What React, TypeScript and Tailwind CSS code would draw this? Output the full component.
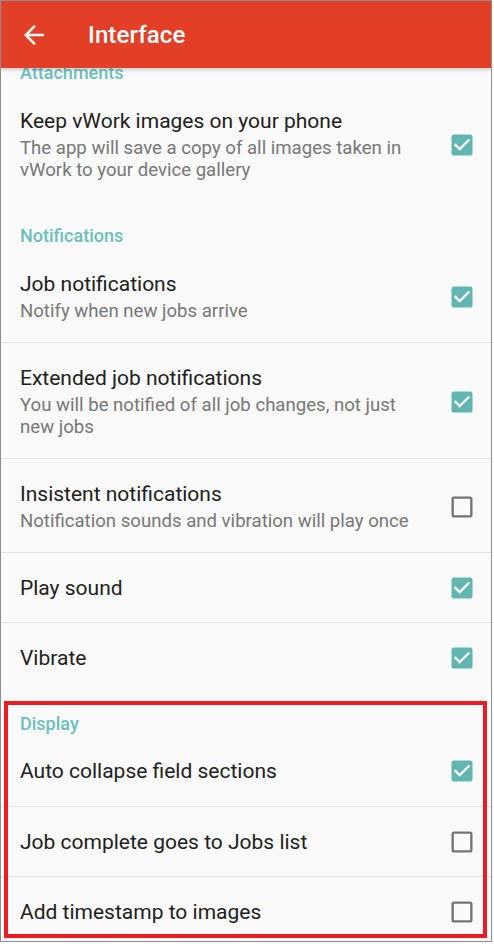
import type { ReactNode } from "react";

type Pref = { title: string; summary?: string; checked: boolean };

const font = { fontFamily: "Roboto, 'Noto Sans', sans-serif" };

function CheckBox({ checked }: { checked: boolean }) {
  return checked ? (
    <svg viewBox="0 0 24 24" className="w-[28px] h-[28px] shrink-0">
      <path fill="#61b6b1" d="M19 3H5c-1.11 0-2 .9-2 2v14c0 1.1.89 2 2 2h14c1.11 0 2-.9 2-2V5c0-1.1-.89-2-2-2z" />
      <path fill="#ffffff" d="M10 17l-5-5 1.41-1.41L10 14.17l7.59-7.59L19 8l-9 9z" />
    </svg>
  ) : (
    <svg viewBox="0 0 24 24" className="w-[28px] h-[28px] shrink-0">
      <path fill="#747474" d="M19 5v14H5V5h14m0-2H5c-1.1 0-2 .9-2 2v14c0 1.1.9 2 2 2h14c1.1 0 2-.9 2-2V5c0-1.1-.9-2-2-2z" />
    </svg>
  );
}

function Category({ label, h }: { label: string; h: string }) {
  return (
    <div className={`${h} flex items-end pl-[19px] pb-[2px]`}>
      <span className="text-[18px] leading-[20px] font-medium text-[#6bbfba]">{label}</span>
    </div>
  );
}

function Row({ pref, divider }: { pref: Pref; divider: boolean }) {
  const pad = pref.summary ? (divider ? "pt-[22px] pb-[20px]" : "pt-[23px] pb-[20px]") : "h-[70px]";
  return (
    <div
      className={`flex items-center justify-between pl-[19px] pr-[15px] ${divider ? "border-t border-[#e2e2e2]" : ""} ${pad}`}
    >
      <div className="flex flex-col pr-6">
        <span className="text-[21px] leading-[26px] text-[#212121]">{pref.title}</span>
        {pref.summary && (
          <span className="mt-[3px] text-[18.6px] leading-[22px] text-[#777777] max-w-[400px]">{pref.summary}</span>
        )}
      </div>
      <CheckBox checked={pref.checked} />
    </div>
  );
}

function Group({ children }: { children: ReactNode }) {
  return <div className="flex flex-col">{children}</div>;
}

const attachments: Pref[] = [
  {
    title: "Keep vWork images on your phone",
    summary: "The app will save a copy of all images taken in vWork to your device gallery",
    checked: true,
  },
];

const notifications: Pref[] = [
  { title: "Job notifications", summary: "Notify when new jobs arrive", checked: true },
  {
    title: "Extended job notifications",
    summary: "You will be notified of all job changes, not just new jobs",
    checked: true,
  },
  { title: "Insistent notifications", summary: "Notification sounds and vibration will play once", checked: false },
  { title: "Play sound", checked: true },
  { title: "Vibrate", checked: true },
];

const display: Pref[] = [
  { title: "Auto collapse field sections", checked: true },
  { title: "Job complete goes to Jobs list", checked: false },
  { title: "Add timestamp to images", checked: false },
];

export default function App() {
  return (
    <div className="w-[494px] h-[944px] bg-white overflow-hidden relative" style={font}>
      <div className="w-[492px] h-[942px] border border-[#8d8d8d] bg-[#fafafa] flex flex-col overflow-hidden">
        <div className="relative z-10 h-[67px] shrink-0 bg-[#e33f27] flex items-center shadow-[0_2px_3px_rgba(0,0,0,0.18)]">
          <svg viewBox="0 0 24 24" className="w-[30px] h-[30px] ml-[18px]">
            <path fill="#ffffff" d="M20 11H7.83l5.59-5.59L12 4l-8 8 8 8 1.41-1.41L7.83 13H20v-2z" />
          </svg>
          <span className="ml-[39px] text-[24px] font-medium text-white tracking-[0.1px]">Interface</span>
        </div>
        <div className="flex flex-col -mt-[27px]">
          <Category label="Attachments" h="h-[44px]" />
          <Group>
            {attachments.map((p, i) => (
              <Row key={p.title} pref={p} divider={i > 0} />
            ))}
          </Group>
          <Category label="Notifications" h="h-[47px]" />
          <Group>
            {notifications.map((p, i) => (
              <Row key={p.title} pref={p} divider={i > 0} />
            ))}
          </Group>
          <Category label="Display" h="h-[44px]" />
          <Group>
            {display.map((p, i) => (
              <Row key={p.title} pref={p} divider={i > 0} />
            ))}
          </Group>
        </div>
      </div>
      {/* highlight annotation */}
      <div className="absolute left-[4px] top-[701px] w-[483px] h-[237px] border-[4px] border-[#ed1c24] pointer-events-none" />
    </div>
  );
}
